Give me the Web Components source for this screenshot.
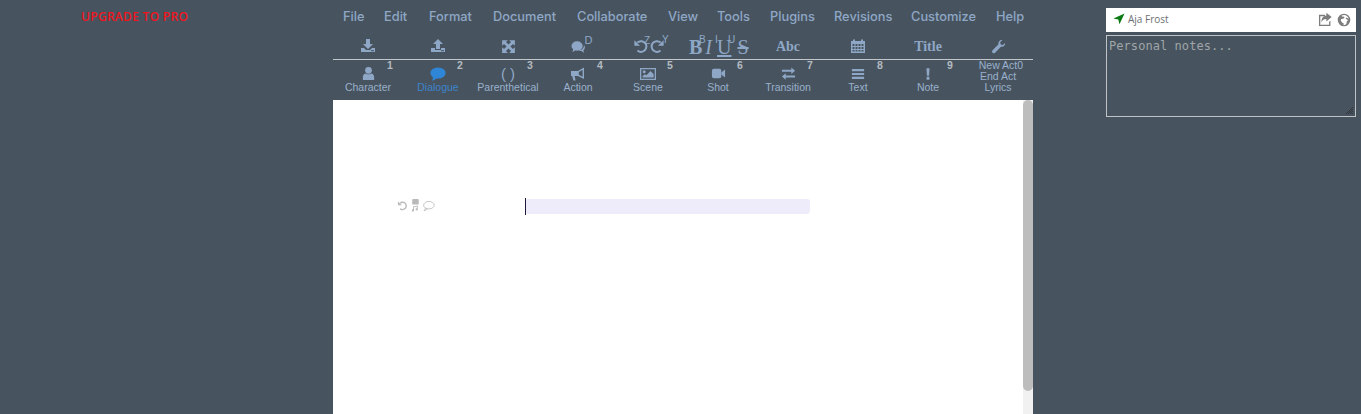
<!DOCTYPE html>
<html><head><meta charset="utf-8"><title>Script editor</title>
<style>
html,body{margin:0;height:414px;overflow:hidden;background:#47545f}
</style></head><body>
<app-shell>
  <upgrade-link slot="left">UPGRADE TO PRO</upgrade-link>
  <menu-bar slot="center"></menu-bar>
  <tool-strip slot="center"></tool-strip>
  <type-strip slot="center"></type-strip>
  <script-page slot="center"></script-page>
  <user-box slot="right" name="Aja Frost"></user-box>
  <notes-box slot="right">Personal notes...</notes-box>
</app-shell>
<script>
const ICONS={
download:'<path d="M6 1h4v5h3L8 11 3 6h3z"/><path d="M1 10h3l2 2h4l2-2h3v4H1z"/><rect x="11" y="12.2" width="3" height="1" fill="#47545f"/>',
upload:'<path d="M8 1l5 5h-3v5H6V6H3z"/><path d="M1 10h4v2h6v-2h4v4H1z"/><rect x="11" y="12.2" width="3" height="1" fill="#47545f"/>',
expand:'<path d="M2 2h5.4L5.6 3.8 8 6.2l2.4-2.4L8.6 2H14v5.4l-1.8-1.8L9.8 8l2.4 2.4 1.8-1.8V14H8.6l1.8-1.8L8 9.8l-2.4 2.4L7.4 14H2V8.6l1.8 1.8L6.2 8 3.8 5.6 2 7.4z"/>',
comments:'<ellipse cx="6.5" cy="7.5" rx="6" ry="5"/><path d="M2.5 10L1.5 14l4-2.5z"/><path d="M13.8 6.5c1.6 1.8 1.2 4.4-.6 5.6l.8 2.6-3-1.9c-1 .2-2 .1-3-.3 3.4-.2 6.2-2.8 5.8-6z" />',
calendar:'<path fill-rule="evenodd" d="M1 3h2V1.5h2V3h6V1.5h2V3h2v12H1zM2.5 6v2h2V6zm3 0v2h2V6zm3 0v2h2V6zm3 0v2h2V6zm-9 3v2h2V9zm3 0v2h2V9zm3 0v2h2V9zm3 0v2h2V9zm-9 3v1.6h2V12zm3 0v1.6h2V12zm3 0v1.6h2V12zm3 0v1.6h2V12z"/>',
wrench:'<path d="M15 4.2c.4 2.4-1.8 4.6-4.4 4L4.4 14.6c-.8.8-2 .8-2.7 0-.8-.8-.7-1.9 0-2.7L8 5.6C7.4 3 9.6.6 12.2 1L9.8 3.4l.5 2.4 2.4.5z"/>',
user:'<circle cx="8" cy="4.6" r="3.6"/><path d="M2 15v-3.4C2 9.6 3.6 8.2 5.2 8c1.6 1.2 4 1.2 5.6 0 1.6.2 3.2 1.6 3.2 3.6V15z"/>',
bubble:'<ellipse cx="8" cy="7" rx="7.6" ry="5.6"/><path d="M3 10.4L2.4 15l5-3z"/>',
bullhorn:'<path fill-rule="evenodd" d="M14 1.4V13L8 10H4.6l1 4.4H3.4L2.2 10H1V5h7zM12.6 4L8.8 6v2.8l3.8 2z"/>',
picture:'<path fill-rule="evenodd" d="M0 2h16v12H0zm1.3 1.3v9.4h13.4V3.3z"/><circle cx="4.2" cy="5.8" r="1.5"/><path d="M2.6 11.6V10l2.4-1.8 1.4 1L10.6 5l3 3.2v3.4z"/>',
video:'<rect x="1" y="3" width="10" height="10" rx="2"/><path d="M11 7l4-3.2v8.4L11 9z"/>',
exchange:'<path d="M1 5h10V2.6L15 6l-4 3.4V7H1z" transform="translate(0 -1)"/><path d="M15 11H5v2.4L1 10l4-3.4V9h10z" transform="translate(0 1.2)"/>',
bars:'<path d="M1 2.4h14v2.4H1zM1 6.8h14v2.4H1zM1 11.2h14v2.4H1z"/>',
bang:'<path d="M6.2 1.5h3.6L9.2 10H6.8zM6.4 11.2h3.2V14.5H6.4z"/>',
undo:'<path d="M4.4 4.6C6.8 2.5 10.5 2.9 12.3 5.2c1.8 2.4 1.3 5.8-1.1 7.6-2 1.5-4.8 1.4-6.7-.2" fill="none" stroke="currentColor" stroke-width="2"/><path d="M1.4 2.2v5.6h5.6z"/>',
redo:'<path d="M11.6 4.6C9.2 2.5 5.5 2.9 3.7 5.2c-1.8 2.4-1.3 5.8 1.1 7.6 2 1.5 4.8 1.4 6.7-.2" fill="none" stroke="currentColor" stroke-width="2"/><path d="M14.6 2.2v5.6H9z"/>',
nav:'<path d="M15.4.6L8.6 15l-1.5-6.5L.6 7.2z"/>',
share:'<path d="M2.5 3h6v1.4h-5v9.2h9.4V10.4l1.4-1.2v5.8H2.1V3z"/><path d="M10 .8l5.6 4.6L10 10V7.4C7.4 7.4 5.8 8.4 4.6 11c0-4 2-6.9 5.4-7.2z"/>',
globe:'<path fill-rule="evenodd" d="M8 .8a7.2 7.2 0 1 1 0 14.4A7.2 7.2 0 0 1 8 .8zM8 2.2c-1 0-1.9.2-2.7.7l.9 1.5 1.5-.3 1 1-1.6 1.6-2.3.2-.5 2 2.1 2.5 1 .1.2 2.4c.9 0 3-1 3.2-1.4l.2-2.6 1.6-1.8-1.3-.6-1.4-1.2.8-1.2 2 1.2.8.3C13.2 4.4 10.8 2.2 8 2.2z"/>',
};
const svg=(n,s=16,st='')=>`<svg viewBox="0 0 16 16" width="${s}" height="${s}" fill="currentColor" style="display:block;flex:none;${st}" aria-hidden="true">${ICONS[n]}</svg>`;
function def(tag,css,html){
  customElements.define(tag,class extends HTMLElement{
    constructor(){super();this.attachShadow({mode:'open'});}
    connectedCallback(){this.shadowRoot.innerHTML=`<style>${css}</style>`+(typeof html==='function'?html(this):html);}
  });
}
def('app-shell',`:host{display:grid;grid-template-columns:333px 700px 1fr;height:414px;overflow:hidden;background:#47545f}
.l{padding:10px 0 0 81px}.c{display:flex;flex-direction:column;height:414px;min-width:0}.r{padding:8px 5px 0 73px;display:flex;flex-direction:column;gap:3px}`,
`<div class="l"><slot name="left"></slot></div><div class="c"><slot name="center"></slot></div><div class="r"><slot name="right"></slot></div>`);
def('upgrade-link',`:host{display:block;font:600 12px/14px "Open Sans",sans-serif;letter-spacing:.3px;color:#f0141e;white-space:nowrap}`,`<slot></slot>`);
const MENU=['File','Edit','Format','Document','Collaborate','View','Tools','Plugins','Revisions','Customize','Help'];
def('menu-bar',`:host{display:grid;grid-template-columns:41px 45px 64px 84px 91px 49px 53px 64px 77px 85px auto;height:36px;box-sizing:border-box;padding:9px 0 0 10px;font:500 12.8px/16px Inter,sans-serif;color:#8fa7c6;white-space:nowrap}`,
MENU.map(m=>`<span>${m}</span>`).join(''));
const cellCss=`:host{display:grid;grid-template-columns:repeat(10,70px);width:700px}
.cell{position:relative;display:flex;flex-direction:column;align-items:center;color:#8fa7c6}
sup{position:absolute;line-height:1;font-weight:400;vertical-align:baseline}`;
def('tool-strip',cellCss+`:host{height:24px;box-sizing:border-box;border-bottom:1px solid #c3c7ca}.cell{padding-top:2px;height:20px;justify-content:flex-start}
.t{font:bold 14px/18px "Liberation Serif",serif;white-space:nowrap;position:relative}
.pair{display:flex;align-items:center;position:relative}
sup{font:11px/11px "Liberation Sans",sans-serif}
.biu{font:20px/19px "Liberation Serif",serif;display:flex;position:relative;width:58px}
.biu span{position:relative}`,
`<div class="cell">${svg('download')}</div>
<div class="cell">${svg('upload')}</div>
<div class="cell">${svg('expand',17,'margin-top:0')}</div>
<div class="cell"><div class="pair">${svg('comments',15,'margin-top:1px')}<sup style="left:14px;top:-3px">D</sup></div></div>
<div class="cell"><div class="pair" style="margin-top:0;margin-left:2px">${svg('undo',16)}<span style="width:0"></span>${svg('redo',16)}<sup style="left:11px;top:-3px;font-size:10px">Z</sup><sup style="left:29px;top:-4px;font-size:10px">Y</sup></div></div>
<div class="cell"><div class="biu"><span style="font-weight:700">B</span><span style="font-style:italic;margin-left:3px">I</span><span style="text-decoration:underline;margin-left:5px">U</span><span style="text-decoration:line-through;margin-left:6px">S</span><sup style="left:10px;top:-4px;font-size:10px">B</sup><sup style="left:26px;top:-4px;font-size:10px">I</sup><sup style="left:39px;top:-4px;font-size:10px">U</sup></div></div>
<div class="cell"><span class="t">Abc</span></div>
<div class="cell">${svg('calendar',16,'margin-top:0')}</div>
<div class="cell"><span class="t">Title</span></div>
<div class="cell">${svg('wrench',15,'margin-top:1px')}</div>`);
const TYPES=[['Character','user',1,15],['Dialogue','bubble',2,16],['Parenthetical',null,3],['Action','bullhorn',4,16],['Scene','picture',5,16],['Shot','video',6,15],['Transition','exchange',7,15],['Text','bars',8,14],['Note','bang',9,14]];
def('type-strip',cellCss+`:host{height:40px}
.cell{height:40px;box-sizing:border-box;padding-top:6px;font:10.5px/12px "Liberation Sans",sans-serif;color:#9ab0cc}
.i{height:15px;display:flex;align-items:center;justify-content:center;color:#8fa7c6}
.lb{margin-top:0;white-space:nowrap}
.on .i{color:#2f86d6}.on .lb{color:#3d83cc}
sup{font:bold 10.5px/11px "Liberation Sans",sans-serif;color:#b4bac0;left:54px;top:0}
.par{font:15px/15px "Liberation Sans",sans-serif}
.m{line-height:11px;text-align:center}
.m div{white-space:nowrap;position:relative}
.m sup{font:inherit;color:inherit;left:100%;top:0}`,
TYPES.map(t=>`<div class="cell${t[0]==='Dialogue'?' on':''}"><div class="i">${t[1]?svg(t[1],t[3]):'<span class="par">( )</span>'}</div><div class="lb">${t[0]}</div><sup>${t[2]}</sup></div>`).join('')+
`<div class="cell m" style="padding-top:0"><div>New Act<sup>0</sup></div><div>End Act</div><div>Lyrics</div></div>`);
def('script-page',`:host{flex:1;display:flex;background:#fff;min-height:0;overflow:hidden}
.page{flex:1;padding-top:99px;display:flex;align-items:flex-start;min-width:0}
.gut{display:flex;align-items:center;gap:1px;margin:0 0 0 64px;height:13px;color:#b9b9b9;width:128px}
.line{width:285px;height:15px;background:#eeecfb;border-radius:3px;position:relative}
.caret{position:absolute;left:0;top:-1px;width:1px;height:17px;background:#1b1b3a}
.bar{width:10px;background:#f1f1f1;display:flex;flex-direction:column}
.thumb{height:291px;background:#bdbdbd;border-radius:5px}`,
`<div class="page"><div class="gut">${svg('undo',11)}<svg viewBox="0 0 12 14" width="12" height="13" fill="currentColor" style="display:block"><rect x="3" y="0" width="7" height="6" rx="1"/><path d="M5 9v3.2a1.2 1.2 0 1 1-1-1V8l5-1v4a1.2 1.2 0 1 1-1-1V8.2z"/></svg><svg viewBox="0 0 16 14" width="13" height="12" fill="none" stroke="currentColor" stroke-width="1" style="display:block"><ellipse cx="8.5" cy="6" rx="6.5" ry="4.6"/><path d="M4.5 9.5L2.5 13l4-2"/></svg></div><div class="line"><div class="caret"></div></div></div><div class="bar"><div class="thumb"></div></div>`);
def('user-box',`:host{display:flex;align-items:center;height:24px;background:#fff;box-sizing:border-box;padding:0 5px 2px 7px;color:#777}
.n{font:10px/14px "Open Sans",sans-serif;margin-left:3px;flex:1;color:#6d6f73}
.g{color:#0c7a13}.a{display:flex;gap:5px;color:#7d7d7d}`,
h=>`<span class="g">${svg('nav',12)}</span><span class="n">${h.getAttribute('name')}</span><span class="a">${svg('share',15)}${svg('globe',14,'margin-top:1px')}</span>`);
def('notes-box',`:host{display:block;position:relative;height:82px;width:250px;box-sizing:border-box;border:1px solid #bfc3c5;padding:3px 2px;font:12px/15px "DejaVu Sans Mono",monospace;letter-spacing:.06px;color:#a0a5a8;overflow:hidden}
svg{position:absolute;right:2px;bottom:2px}`,
`<slot></slot><svg viewBox="0 0 7 7" width="7" height="7" stroke="#2b2f33" stroke-width=".8" aria-hidden="true"><path d="M0 7L7 0M2 7L7 2M4 7L7 4M6 7L7 6"/></svg>`);
</script>
</body></html>
